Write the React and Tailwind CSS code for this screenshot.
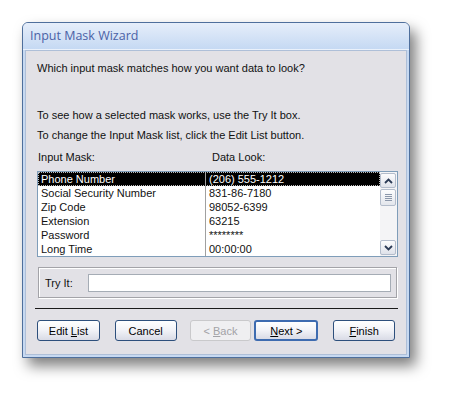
import React from 'react';

const masks = [
  { name: 'Phone Number', look: '(206) 555-1212' },
  { name: 'Social Security Number', look: '831-86-7180' },
  { name: 'Zip Code', look: '98052-6399' },
  { name: 'Extension', look: '63215' },
  { name: 'Password', look: '********' },
  { name: 'Long Time', look: '00:00:00' },
];

function Chevron({ up }) {
  return (
    <svg width="9" height="6" viewBox="0 0 9 6">
      <path
        d={up ? 'M1 5 L4.5 1.5 L8 5' : 'M1 1 L4.5 4.5 L8 1'}
        fill="none"
        stroke="#2b3a55"
        strokeWidth="1.8"
      />
    </svg>
  );
}

function Button({ children, primary, disabled, w }) {
  let cls = 'h-[21px] rounded-[3px] flex items-center justify-center text-[11px] ';
  if (disabled) {
    cls += 'border border-[#c9c9cb] bg-[#efeff1] text-[#a2a2a6]';
  } else if (primary) {
    cls += 'border-2 border-[#3d6bb0] bg-gradient-to-b from-[#ffffff] via-[#f1f2f7] to-[#d9dbe6] text-black';
  } else {
    cls += 'border border-[#2d4f7c] bg-gradient-to-b from-[#ffffff] via-[#f1f2f7] to-[#d9dbe6] text-black';
  }
  return (
    <div className={cls} style={{ width: w }}>
      <span className="whitespace-pre">{children}</span>
    </div>
  );
}

export default function App() {
  return (
    <div className="w-[453px] h-[400px] bg-white pt-[22px] pl-[22px] font-['Liberation_Sans',Arial,sans-serif]">
      {/* Dialog window */}
      <div className="w-[388px] h-[336px] flex flex-col border border-[#4f6f9c] rounded-t-[6px] bg-[#c7d9f1] shadow-[6px_8px_14px_rgba(0,0,0,0.5)]">
        {/* Title bar */}
        <div className="h-[27px] flex items-center pl-[7px] rounded-t-[5px] bg-gradient-to-b from-[#e6eefa] to-[#c5d9f3] border-b border-[#eaf1fb]">
          <span className="text-[12.5px] text-[#4b62a6] font-['Open_Sans',sans-serif] leading-none">Input Mask Wizard</span>
        </div>

        {/* Body */}
        <div className="flex-1 mx-[2px] mb-[2px] bg-[#e2e1e6] border border-[#aebfd8] flex flex-col pl-[11px] pr-[11px] text-[11px] text-[#111] leading-[14px]">
          <div className="mt-[10px]">Which input mask matches how you want data to look?</div>
          <div className="mt-[33px]">To see how a selected mask works, use the Try It box.</div>
          <div className="mt-[6px]">To change the Input Mask list, click the Edit List button.</div>

          <div className="mt-[8px] flex">
            <div className="w-[175px] pl-[1px]">Input Mask:</div>
            <div>Data Look:</div>
          </div>

          {/* List box */}
          <div className="mt-[7px] h-[86px] w-[361px] border border-[#7f9db9] bg-white flex overflow-hidden">
            <div className="flex-1 flex flex-col">
              {masks.map((m, i) => (
                <div
                  key={m.name}
                  className={
                    'h-[14px] shrink-0 flex ' +
                    (i === 0 ? 'bg-black text-white outline-1 outline-dotted outline-[#bbbbbb] -outline-offset-1' : '')
                  }
                >
                  <div className="w-[168px] pl-[3px] border-r border-[#a0a0a0] truncate">{m.name}</div>
                  <div className="pl-[3px]">{m.look}</div>
                </div>
              ))}
            </div>
            {/* Scrollbar */}
            <div className="w-[17px] flex flex-col bg-[#f4f4f6] py-[1px] pr-[1px]">
              <div className="h-[15px] border border-[#b3bccb] rounded-[2px] bg-gradient-to-b from-[#fcfcfd] to-[#dfe2ea] flex items-center justify-center">
                <Chevron up />
              </div>
              <div className="h-[17px] mt-[1px] border border-[#b3bccb] rounded-[2px] bg-gradient-to-b from-[#fcfcfd] to-[#e3e6ec] flex flex-col items-center justify-center gap-[1px]">
                <div className="w-[7px] h-px bg-[#8b97aa]" />
                <div className="w-[7px] h-px bg-[#8b97aa]" />
                <div className="w-[7px] h-px bg-[#8b97aa]" />
                <div className="w-[7px] h-px bg-[#8b97aa]" />
              </div>
              <div className="flex-1" />
              <div className="h-[15px] border border-[#b3bccb] rounded-[2px] bg-gradient-to-b from-[#fcfcfd] to-[#dfe2ea] flex items-center justify-center">
                <Chevron />
              </div>
            </div>
          </div>

          {/* Try It group */}
          <div className="mt-[10px] w-[359px] ml-[1px] h-[31px] border border-[#a3a3a8] shadow-[1px_1px_0_#ffffff,inset_1px_1px_0_#ffffff] flex items-center pl-[6px] pr-[5px]">
            <div className="w-[43px]">Try It:</div>
            <div className="flex-1 h-[18px] border border-[#a5acb5] bg-white" />
          </div>

          {/* Separator */}
          <div className="mt-[10px] w-[363px] -ml-[2px] h-px bg-[#1a1a1a]" />

          {/* Buttons */}
          <div className="mt-[11px] flex">
            <Button w="63px">
              Edit <u>L</u>ist
            </Button>
            <div className="w-[15px]" />
            <Button w="62px">Cancel</Button>
            <div className="w-[13px]" />
            <Button w="62px" disabled>
              &lt; <u>B</u>ack
            </Button>
            <div className="w-[3px]" />
            <Button w="64px" primary>
              <u>N</u>ext &gt;
            </Button>
            <div className="w-[15px]" />
            <Button w="62px">
              <u>F</u>inish
            </Button>
          </div>
        </div>
      </div>
    </div>
  );
}
